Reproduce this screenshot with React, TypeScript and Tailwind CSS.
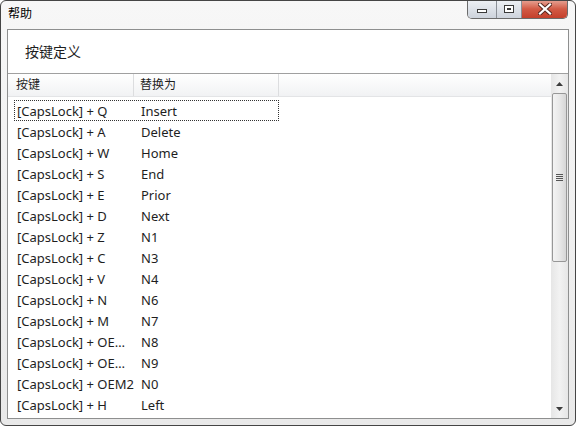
import React from "react";

const rows: [string, string][] = [
  ["[CapsLock] + Q", "Insert"],
  ["[CapsLock] + A", "Delete"],
  ["[CapsLock] + W", "Home"],
  ["[CapsLock] + S", "End"],
  ["[CapsLock] + E", "Prior"],
  ["[CapsLock] + D", "Next"],
  ["[CapsLock] + Z", "N1"],
  ["[CapsLock] + C", "N3"],
  ["[CapsLock] + V", "N4"],
  ["[CapsLock] + N", "N6"],
  ["[CapsLock] + M", "N7"],
  ["[CapsLock] + OE…", "N8"],
  ["[CapsLock] + OE…", "N9"],
  ["[CapsLock] + OEM2", "N0"],
  ["[CapsLock] + H", "Left"],
];

const font = { fontFamily: '"Noto Sans", "Noto Sans CJK SC", sans-serif' };

export default function App() {
  return (
    <div
      className="w-[576px] h-[426px] flex flex-col border border-[#454545] rounded-[6px] bg-gradient-to-b from-[#f7f7f7] to-[#e9e9e9] px-[6px] pb-[6px] text-[#000] overflow-hidden"
      style={font}
    >
      {/* title bar */}
      <div className="h-[28px] flex items-start justify-between">
        <div className="pl-[1px] pt-[5px] text-[12px] leading-[16px] text-[#000]">帮助</div>
        <div className="flex h-[19px] -mt-[1px] mr-[1px] border border-t-0 border-[#6b6b6b] rounded-b-[5px] overflow-hidden">
          <div className="w-[29px] h-full bg-gradient-to-b from-[#eef1f5] to-[#cdd3dc] border-r border-[#8a8f96] flex items-center justify-center">
            <div className="w-[10px] h-[4px] border border-[#3a3a3a] bg-white mt-[4px]" />
          </div>
          <div className="w-[25px] h-full bg-gradient-to-b from-[#eef1f5] to-[#cdd3dc] border-r border-[#8a8f96] flex items-center justify-center">
            <div className="w-[10px] h-[8px] border border-[#3a3a3a] bg-white flex items-center justify-center">
              <div className="w-[4px] h-[2px] border border-[#3a3a3a]" />
            </div>
          </div>
          <div className="w-[45px] h-full bg-gradient-to-b from-[#e6a597] via-[#d25a45] to-[#c4402c] flex items-center justify-center">
            <svg width="14" height="12" viewBox="0 0 14 12">
              <path d="M2 1.5 L12 10.5 M12 1.5 L2 10.5" stroke="#5a2a22" strokeWidth="4.2" strokeLinecap="square" />
              <path d="M2 1.5 L12 10.5 M12 1.5 L2 10.5" stroke="#ffffff" strokeWidth="2.2" strokeLinecap="square" />
            </svg>
          </div>
        </div>
      </div>

      {/* inner panel */}
      <div className="flex-1 flex flex-col border border-[#8e8f8f] bg-white min-h-0">
        <div className="h-[43px] flex items-center pl-[17px] text-[14px] text-[#1e1e1e]">按键定义</div>
        <div className="flex-1 flex border-t border-[#a0a0a0] min-h-0">
          {/* list */}
          <div className="flex-1 flex flex-col min-w-0 overflow-hidden">
            <div className="h-[23px] flex bg-gradient-to-b from-[#ffffff] to-[#f1f2f4] border-b border-[#e3e4e6] text-[12px] text-[#1e1e1e] shrink-0">
              <div className="w-[126px] border-r border-[#dcdddf] pl-[8px] flex items-center">按键</div>
              <div className="w-[145px] border-r border-[#dcdddf] pl-[6px] flex items-center">替换为</div>
              <div className="flex-1" />
            </div>
            <div className="pt-[3px] pl-[6px] flex flex-col">
              {rows.map(([k, v], i) => (
                <div
                  key={i}
                  className={`h-[21px] w-[265px] flex items-center pt-[1px] text-[13px] leading-[17px] text-[#1e1e1e] shrink-0 ${
                    i === 0 ? "border border-dotted border-[#333]" : "border border-transparent"
                  }`}
                >
                  <div className="w-[124px] pl-[2px] whitespace-nowrap">{k}</div>
                  <div className="pl-[2px] whitespace-nowrap">{v}</div>
                </div>
              ))}
            </div>
          </div>
          {/* scrollbar */}
          <div className="w-[17px] flex flex-col bg-gradient-to-r from-[#e6e6e6] via-[#f2f2f2] to-[#e6e6e6] shrink-0">
            <div className="h-[19px] flex items-center justify-center">
              <svg width="7" height="4" viewBox="0 0 7 4">
                <path d="M0 4 L3.5 0 L7 4 Z" fill="#3c3c3c" />
              </svg>
            </div>
            <div className="h-[169px] mx-[1px] rounded-[2px] border border-[#979797] bg-gradient-to-r from-[#f3f3f3] via-[#e8e8e8] to-[#d6d6d6] flex flex-col items-center justify-center gap-[1px]">
              <div className="w-[7px] h-[1px] bg-[#555]" />
              <div className="w-[7px] h-[1px] bg-[#555]" />
              <div className="w-[7px] h-[1px] bg-[#555]" />
              <div className="w-[7px] h-[1px] bg-[#555]" />
            </div>
            <div className="flex-1" />
            <div className="h-[19px] flex items-center justify-center">
              <svg width="7" height="4" viewBox="0 0 7 4">
                <path d="M0 0 L7 0 L3.5 4 Z" fill="#3c3c3c" />
              </svg>
            </div>
          </div>
        </div>
      </div>
    </div>
  );
}
